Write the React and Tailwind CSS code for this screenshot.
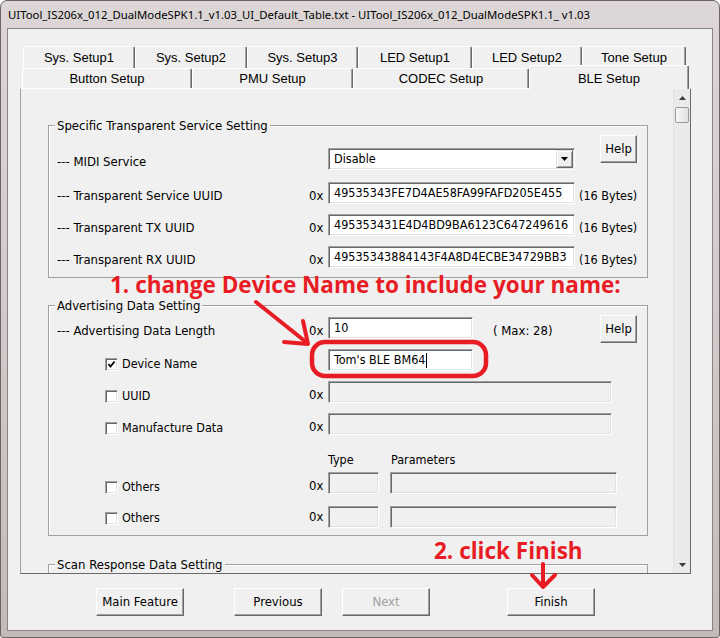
import React from "react";

const UI = "font-['DejaVu_Sans_Condensed','DejaVu_Sans',sans-serif]";
const TABF = "font-['Liberation_Sans',Arial,sans-serif]";
const RED = "#e81c24";

function Edit({ w, value, disabled, cursor }) {
  return (
    <div
      className={`${w} h-[22px] shrink-0 border border-t-[#a0a0a0] border-l-[#a0a0a0] border-r-white border-b-white shadow-[inset_1px_1px_0_#696969,inset_-1px_-1px_0_#e3e3e3] ${
        disabled ? "bg-[#f0f0f0]" : "bg-white"
      } pl-[5px] text-[12.5px] text-black whitespace-nowrap overflow-hidden flex items-center`}
    >
      {value}
      {cursor && <span className="inline-block w-px h-[15px] bg-black ml-[1px]" />}
    </div>
  );
}

function Btn({ w, children, disabled, extra = "" }) {
  return (
    <div
      className={`${w} h-[28px] shrink-0 flex items-center justify-center border border-t-white border-l-white border-r-[#696969] border-b-[#696969] shadow-[inset_-1px_-1px_0_#a0a0a0] bg-[#f0f0f0] text-[13px] ${
        disabled ? "text-[#a0a0a0]" : "text-black"
      } ${extra}`}
    >
      {children}
    </div>
  );
}

function Check({ checked }) {
  return (
    <div className="w-[13px] h-[13px] shrink-0 bg-white border border-t-[#a0a0a0] border-l-[#a0a0a0] border-r-white border-b-white shadow-[inset_1px_1px_0_#696969,inset_-1px_-1px_0_#e3e3e3] flex items-center justify-center">
      {checked && (
        <svg width="9" height="9" viewBox="0 0 9 9">
          <path d="M1.5 4 L3.5 6.5 L7.5 1.5" fill="none" stroke="#000" strokeWidth="1.8" />
        </svg>
      )}
    </div>
  );
}

function Tab({ w, label }) {
  return (
    <div
      className={`${w} h-[22px] shrink-0 flex items-center justify-center border-t border-l border-r border-t-white border-l-white border-r-[#696969] shadow-[inset_-1px_0_0_#a0a0a0] rounded-t-[2px] bg-[#f0f0f0] text-[13px] text-black`}
    >
      {label}
    </div>
  );
}

function Tab2({ w, label }) {
  return (
    <div
      className={`${w} h-[20px] shrink-0 flex items-center justify-center border-t border-l border-r border-t-white border-l-white border-r-[#696969] shadow-[inset_-1px_0_0_#a0a0a0] rounded-t-[2px] bg-[#f0f0f0] text-[13px] text-black`}
    >
      {label}
    </div>
  );
}

function Legend({ children }) {
  return (
    <div className="-mt-[8px] -ml-[2px] px-[2px] h-[16px] leading-[16px] w-fit bg-[#f0f0f0] text-[13px] text-black whitespace-nowrap">
      {children}
    </div>
  );
}

function Row({ label, value, bytes }) {
  return (
    <div className="flex items-start h-[22px]">
      <div className="w-[252px] shrink-0 whitespace-nowrap mt-[3px] leading-[22px]">{label}</div>
      <div className="w-[19px] shrink-0 mt-[3px] leading-[22px]">0x</div>
      <Edit w="w-[247px]" value={value} />
      {bytes && <div className="ml-[4px] whitespace-nowrap text-[12.5px] mt-[3px] leading-[22px]">(16 Bytes)</div>}
    </div>
  );
}

function CheckRow({ label, checked, noPrefix, high, children }) {
  return (
    <div className="flex items-start h-[22px]">
      <div className={`w-[252px] h-[22px] ${high ? "mt-[1px]" : "mt-[4px]"} shrink-0 flex items-center pl-[48px]`}>
        <Check checked={checked} />
        <span className="ml-[4px] whitespace-nowrap text-[12.5px]">{label}</span>
      </div>
      <div className={`w-[19px] shrink-0 ${high ? "mt-0" : "mt-[3px]"} leading-[22px]`}>{noPrefix ? "" : "0x"}</div>
      {children}
    </div>
  );
}

export default function App() {
  return (
    <div className="w-[720px] h-[638px] relative overflow-hidden bg-white">
      <div className="w-[720px] h-[638px] rounded-t-[7px] rounded-b-[3px] border border-[#6f6465] bg-gradient-to-b from-[#dcd6d7] via-[#d2c9ca] to-[#c5baba] flex flex-col">
        <div className="h-[27px] shrink-0 flex items-center pl-[7px] font-['Noto_Sans',sans-serif] text-[11.35px] text-black whitespace-nowrap">
          UITool_IS206x_012_DualModeSPK1.1_v1.03_UI_Default_Table.txt - UITool_IS206x_012_DualModeSPK1.1_ v1.03
        </div>
        <div className="mx-[6px] mb-[6px] flex-1 border border-[#8f8485] bg-[#f0f0f0] flex flex-col pl-[12px] pt-[17px]">
          {/* tab row 1 */}
          <div className={`flex ml-[3px] ${TABF}`}>
            <Tab w="w-[112px]" label="Sys. Setup1" />
            <Tab w="w-[112px]" label="Sys. Setup2" />
            <Tab w="w-[111px]" label="Sys. Setup3" />
            <Tab w="w-[114px]" label="LED Setup1" />
            <Tab w="w-[110px]" label="LED Setup2" />
            <Tab w="w-[104px]" label="Tone Setup" />
          </div>
          {/* tab row 2 */}
          <div className={`flex ml-[2px] h-[20px] ${TABF}`}>
            <Tab2 w="w-[170px]" label="Button Setup" />
            <Tab2 w="w-[161px]" label="PMU Setup" />
            <Tab2 w="w-[176px]" label="CODEC Setup" />
            <div className="relative z-10 w-[160px] -mt-[3px] h-[24px] shrink-0 flex justify-center pt-[3px] border-t border-l border-r border-t-white border-l-white border-r-[#696969] shadow-[inset_-1px_0_0_#a0a0a0] rounded-t-[2px] bg-[#f0f0f0] text-[13px] text-black">
              BLE Setup
            </div>
          </div>
          {/* tab page */}
          <div className={`w-[671px] h-[486px] shrink-0 border border-t-white border-l-[#a0a0a0] border-r-[#696969] border-b-[#696969] flex ${UI} text-[13px] text-black`}>
            <div className="flex-1 overflow-hidden flex flex-col pl-[27px] pt-[36px]">
              {/* group 1 */}
              <div className="w-[600px] shrink-0 border border-[#a0a0a0] shadow-[inset_1px_1px_0_#fff] flex flex-col pl-[8px] pb-[9px]">
                <Legend>Specific Transparent Service Setting</Legend>
                <div className="mt-[1px] h-[36px] flex items-start">
                  <div className="w-[252px] shrink-0 mt-[16px] leading-[22px] whitespace-nowrap">--- MIDI Service</div>
                  <div className="w-[19px] shrink-0" />
                  <div className="mt-[13px] w-[247px] h-[22px] shrink-0 border border-t-[#a0a0a0] border-l-[#a0a0a0] border-r-white border-b-white shadow-[inset_1px_1px_0_#696969,inset_-1px_-1px_0_#e3e3e3] bg-white flex items-center pl-[5px] pr-[1px] text-[12.5px]">
                    <span className="flex-1">Disable</span>
                    <div className="w-[17px] h-[18px] border border-t-[#e3e3e3] border-l-[#e3e3e3] border-r-[#696969] border-b-[#696969] shadow-[inset_1px_1px_0_#fff,inset_-1px_-1px_0_#a0a0a0] bg-[#f0f0f0] flex items-center justify-center">
                      <svg width="7" height="4" viewBox="0 0 7 4">
                        <path d="M0 0 H7 L3.5 4 Z" fill="#000" />
                      </svg>
                    </div>
                  </div>
                  <Btn w="w-[37px] ml-[25px]">Help</Btn>
                </div>
                <div className="mt-[11px]">
                  <Row label="--- Transparent Service UUID" value="49535343FE7D4AE58FA99FAFD205E455" bytes />
                </div>
                <div className="mt-[10px]">
                  <Row label="--- Transparent TX UUID" value="495353431E4D4BD9BA6123C647249616" bytes />
                </div>
                <div className="mt-[10px]">
                  <Row label="--- Transparent RX UUID" value="49535343884143F4A8D4ECBE34729BB3" bytes />
                </div>
              </div>

              {/* group 2 */}
              <div className="mt-[27px] w-[600px] shrink-0 border border-[#a0a0a0] shadow-[inset_1px_1px_0_#fff] flex flex-col pl-[8px] pb-[7px]">
                <Legend>Advertising Data Setting</Legend>
                <div className="mt-[1px] h-[28px] flex items-start">
                  <div className="w-[252px] shrink-0 mt-[5px] leading-[22px] whitespace-nowrap">--- Advertising Data Length</div>
                  <div className="w-[19px] shrink-0 mt-[5px] leading-[22px]">0x</div>
                  <div className="mt-[2px]">
                    <Edit w="w-[145px]" value="10" />
                  </div>
                  <div className="ml-[20px] w-[107px] shrink-0 mt-[5px] leading-[22px] whitespace-nowrap">( Max: 28)</div>
                  <Btn w="w-[37px]">Help</Btn>
                </div>
                <div className="mt-[6px]">
                  <CheckRow label="Device Name" checked noPrefix>
                    <Edit w="w-[145px]" value="Tom's BLE BM64" cursor />
                  </CheckRow>
                </div>
                <div className="mt-[10px]">
                  <CheckRow label="UUID">
                    <Edit w="w-[284px]" value="" disabled />
                  </CheckRow>
                </div>
                <div className="mt-[10px]">
                  <CheckRow label="Manufacture Data">
                    <Edit w="w-[284px]" value="" disabled />
                  </CheckRow>
                </div>
                <div className="mt-[15px] h-[20px] flex items-center text-[12.5px]">
                  <div className="w-[271px] shrink-0" />
                  <div className="w-[63px] shrink-0">Type</div>
                  <div>Parameters</div>
                </div>
                <div className="mt-[2px]">
                  <CheckRow label="Others">
                    <Edit w="w-[51px]" value="" disabled />
                    <div className="ml-[11px]">
                      <Edit w="w-[227px]" value="" disabled />
                    </div>
                  </CheckRow>
                </div>
                <div className="mt-[12px]">
                  <CheckRow label="Others" high>
                    <Edit w="w-[51px]" value="" disabled />
                    <div className="ml-[11px]">
                      <Edit w="w-[227px]" value="" disabled />
                    </div>
                  </CheckRow>
                </div>
              </div>

              {/* group 3 */}
              <div className="mt-[28px] w-[600px] h-[60px] shrink-0 border border-[#a0a0a0] shadow-[inset_1px_1px_0_#fff] flex flex-col pl-[8px]">
                <Legend>Scan Response Data Setting</Legend>
              </div>
            </div>
            {/* scrollbar */}
            <div className="w-[17px] shrink-0 bg-[#eaeaea] border-l border-l-[#e2e2e2] flex flex-col">
              <div className="h-[17px] flex items-center justify-center">
                <svg width="7" height="4" viewBox="0 0 7 4">
                  <path d="M0 4 H7 L3.5 0 Z" fill="#3c3c3c" />
                </svg>
              </div>
              <div className="mt-[1px] mx-[1px] h-[16px] rounded-[2px] border border-[#9a9a9a] bg-gradient-to-r from-[#f6f6f6] to-[#e2e2e2]" />
              <div className="flex-1" />
              <div className="h-[17px] flex items-center justify-center">
                <svg width="7" height="4" viewBox="0 0 7 4">
                  <path d="M0 0 H7 L3.5 4 Z" fill="#3c3c3c" />
                </svg>
              </div>
            </div>
          </div>
          {/* bottom buttons */}
          <div className={`mt-[14px] flex ${UI}`}>
            <Btn w="w-[88px] ml-[76px]">Main Feature</Btn>
            <Btn w="w-[88px] ml-[50px]">Previous</Btn>
            <Btn w="w-[88px] ml-[20px]" disabled>Next</Btn>
            <Btn w="w-[88px] ml-[77px]">Finish</Btn>
          </div>
        </div>
      </div>

      {/* red annotations overlay */}
      <svg className="absolute left-0 top-0 pointer-events-none" width="720" height="638">
        <rect x="312" y="342" width="174" height="34" rx="13" fill="none" stroke={RED} strokeWidth="4.5" />
        <path d="M256 302 L306 342" fill="none" stroke={RED} strokeWidth="4" strokeLinecap="round" />
        <path d="M303 321 L308 344 L284 342" fill="none" stroke={RED} strokeWidth="4" strokeLinecap="round" strokeLinejoin="round" />
        <path d="M543 564 L543 586" fill="none" stroke={RED} strokeWidth="4" strokeLinecap="round" />
        <path d="M532 575 L543 587 L555 575" fill="none" stroke={RED} strokeWidth="4" strokeLinecap="round" strokeLinejoin="round" />
      </svg>
      <div className="absolute left-[110px] top-[271px] font-['Open_Sans',sans-serif] font-bold text-[22.5px] leading-[28px] text-[#e81c24] whitespace-nowrap pointer-events-none">
        1. change Device Name to include your name:
      </div>
      <div className="absolute left-[434px] top-[537px] font-['Open_Sans',sans-serif] font-bold text-[22.5px] leading-[28px] text-[#e81c24] whitespace-nowrap pointer-events-none">
        2. click Finish
      </div>
    </div>
  );
}
